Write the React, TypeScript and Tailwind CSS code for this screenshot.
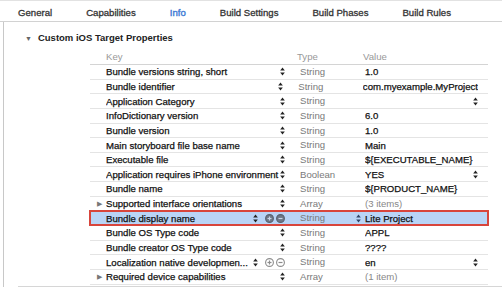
import React from 'react';

type Row = {
    key: string;
    type: string;
    value: string;
    expandable?: boolean;
    dimValue?: boolean;
    valuePopup?: boolean;
    editing?: boolean;
    hover?: boolean;
    selected?: boolean;
};

const rows: Row[] = [
    { key: 'Bundle versions string, short', type: 'String', value: '1.0' },
    { key: 'Bundle identifier', type: 'String', value: 'com.myexample.MyProject' },
    { key: 'Application Category', type: 'String', value: '', valuePopup: true },
    { key: 'InfoDictionary version', type: 'String', value: '6.0' },
    { key: 'Bundle version', type: 'String', value: '1.0' },
    { key: 'Main storyboard file base name', type: 'String', value: 'Main' },
    { key: 'Executable file', type: 'String', value: '${EXECUTABLE_NAME}' },
    { key: 'Application requires iPhone environment', type: 'Boolean', value: 'YES', valuePopup: true },
    { key: 'Bundle name', type: 'String', value: '${PRODUCT_NAME}' },
    { key: 'Supported interface orientations', type: 'Array', value: '(3 items)', expandable: true, dimValue: true },
    { key: 'Bundle display name', type: 'String', value: 'Lite Project', editing: true, selected: true },
    { key: 'Bundle OS Type code', type: 'String', value: 'APPL' },
    { key: 'Bundle creator OS Type code', type: 'String', value: '????' },
    { key: 'Localization native developmen...', type: 'String', value: 'en', hover: true, valuePopup: true },
    { key: 'Required device capabilities', type: 'Array', value: '(1 item)', expandable: true, dimValue: true },
];

const tabs = ['General', 'Capabilities', 'Info', 'Build Settings', 'Build Phases', 'Build Rules'];

const Stepper = ({ color = '#222' }: { color?: string }) => (
    <svg width="5" height="9" viewBox="0 0 5 9" className="shrink-0">
        <path d="M2.5 0.5 L4.8 3.6 L0.2 3.6 Z" fill={color} />
        <path d="M2.5 8.5 L4.8 5.4 L0.2 5.4 Z" fill={color} />
    </svg>
);

const RoundButton = ({ minus, dark }: { minus?: boolean; dark?: boolean }) => {
    const ink = dark ? '#c9d6e8' : '#8d8d8d';
    return (
        <svg width="9" height="9" viewBox="0 0 9 9" className="shrink-0">
            <circle cx="4.5" cy="4.5" r="3.9" fill={dark ? '#6d7787' : 'none'} stroke={dark ? '#5a6372' : '#8d8d8d'} strokeWidth="1.1" />
            <path d="M2.5 4.5 H6.5" stroke={ink} strokeWidth="1.2" />
            {!minus && <path d="M4.5 2.5 V6.5" stroke={ink} strokeWidth="1.2" />}
        </svg>
    );
};

const PropertyRow = ({ row }: { row: Row }) => {
    const showButtons = row.selected || row.hover;
    return (
        <div className={`relative flex items-center h-[14.65px] border-b border-[#e4e4e4] ${row.selected ? 'bg-[#b9d4f6]' : ''}`}>
            {row.selected && (
                <div className="absolute -left-[1px] -right-[1px] -top-[1px] -bottom-[1px] border-2 border-[#d8453c] pointer-events-none" />
            )}
            {/* Key */}
            <div className="w-[200px] h-full flex items-center pr-[5px]">
                <div className="w-[16px] flex justify-center pl-[2px]">
                    {row.expandable && <span className="text-[7px] text-[#777] leading-none">▶</span>}
                </div>
                <span className="flex-1 truncate leading-[13px] text-[#111] [-webkit-text-stroke:0.25px_#111]">{row.key}</span>
                {showButtons ? (
                    <div className="flex items-center gap-[2px]">
                        <Stepper />
                        <span className="w-[3px]" />
                        <RoundButton dark={row.selected} />
                        <RoundButton minus dark={row.selected} />
                    </div>
                ) : (
                    <Stepper />
                )}
            </div>
            {/* Type */}
            <div className="w-[62px] pl-[10px] text-[#7a7a7a]">{row.type}</div>
            {/* Value */}
            <div className="flex-1 flex items-center h-full pr-[10px]">
                <div className="w-[13px] flex justify-center">{row.editing && <Stepper color="#2f4468" />}</div>
                <span className={`flex-1 truncate leading-[13px] ${row.dimValue ? 'text-[#888]' : 'text-[#111] [-webkit-text-stroke:0.25px_#111]'}`}>{row.value}</span>
                {row.valuePopup && <Stepper />}
            </div>
        </div>
    );
};

export default function App() {
    return (
        <div className="w-[502px] h-[287px] bg-white overflow-hidden flex flex-col text-[9.6px] leading-none" style={{ fontFamily: '"Liberation Sans", Arial, sans-serif' }}>
            {/* Tabs */}
            <div className="h-[22px] shrink-0 flex items-center pt-[3px] gap-[34px] pl-[18px] border-t border-[#e2e2e2] border-b border-b-[#d2d2d2] text-[#333]">
                {tabs.map(t => (
                    <span
                        key={t}
                        className={t === 'Info' ? 'text-[#3a78d4] [-webkit-text-stroke:0.35px_#3a78d4]' : '[-webkit-text-stroke:0.3px_#333]'}
                    >
                        {t}
                    </span>
                ))}
            </div>

            {/* Body */}
            <div className="flex-1 flex pl-[3px]">
                <div className="flex-1 border-l border-[#c8c8c8] flex flex-col">
                    <div className="h-[20px] mt-[6px] flex items-center pl-[21px] gap-[6px] text-[#222]">
                        <span className="text-[7px] text-[#666]">▼</span>
                        <span className="font-bold text-[9.5px]">Custom iOS Target Properties</span>
                    </div>
                    <div className="ml-[14px] flex-1 border-b border-[#d6d6d6]">
                        <div className="ml-[72px] w-[398px]">
                            <div className="h-[17px] flex items-end pb-[2px] text-[#999] border-b border-[#d4d4d4]">
                                <span className="w-[200px] pl-[16px]">Key</span>
                                <span className="w-[62px] pl-[7px]">Type</span>
                                <span className="pl-[11px]">Value</span>
                            </div>
                            {rows.map(r => (
                                <PropertyRow key={r.key} row={r} />
                            ))}
                        </div>
                    </div>
                </div>
            </div>
        </div>
    );
}
